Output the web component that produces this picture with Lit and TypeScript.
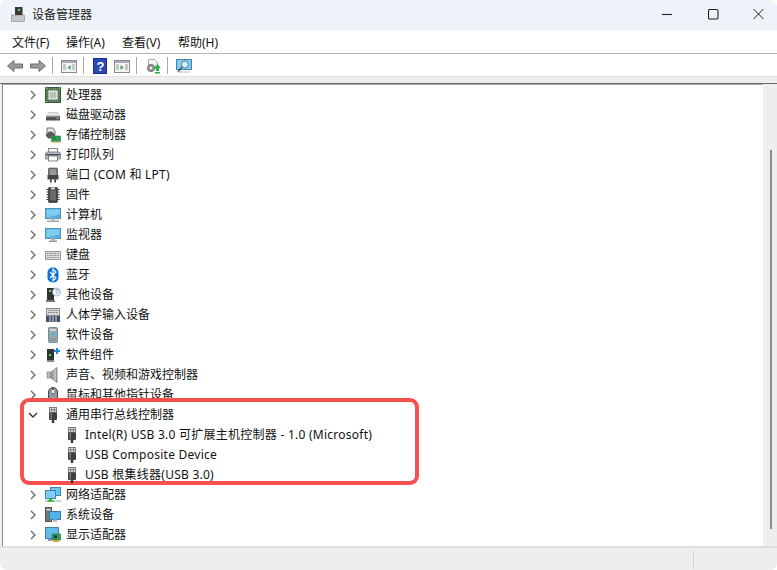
import { LitElement, html, css, svg } from "lit";
import { customElement } from "lit/decorators.js";

const sv = (c: unknown, w = 16, h = 16) =>
  html`<svg width=${w} height=${h} viewBox="0 0 ${w} ${h}">${c}</svg>`;

const usb = svg`<rect x="4.5" y="0.5" width="7" height="5" fill="#c9c9c9" stroke="#7a7a7a"/><rect x="6" y="2" width="1.2" height="1.6" fill="#444"/><rect x="8.8" y="2" width="1.2" height="1.6" fill="#444"/><rect x="4" y="5.5" width="8" height="7.5" rx="1" fill="#3f3f3f"/><rect x="5.5" y="6" width="1.5" height="6.5" fill="#7a7a7a"/><rect x="6.8" y="13" width="2.4" height="3" fill="#333"/>`;

const screen = svg`<rect x="0.5" y="1.5" width="15" height="10" fill="#4fb3e8" stroke="#5b8fb0"/><rect x="1.5" y="2.5" width="13" height="8" fill="#7fcdf2"/><path d="M1.5 10.5h13v-3z" fill="#4ea9de"/>`;

const ICONS: Record<string, unknown> = {
  cpu: svg`<rect x="0.5" y="0.5" width="15" height="15" fill="#2f6b4a" stroke="#2a5a3e"/><path d="M0 1.5h16M0 14.5h16M1.5 0v16M14.5 0v16" stroke="#c9a64a" stroke-width="1" stroke-dasharray="1 1" opacity=".8"/><rect x="3" y="3" width="10" height="10" fill="#dfe3df" stroke="#6f8d79"/><rect x="5" y="5" width="6" height="6" fill="#b9c2bb"/>`,
  disk: svg`<path d="M1.5 9 4 5.5h8L14.5 9z" fill="#e6e6e6" stroke="#aaa" stroke-width=".6"/><rect x="1" y="9" width="14" height="4.5" rx=".5" fill="#4f4f4f"/><rect x="1" y="9" width="14" height="1.3" fill="#8a8a8a"/><rect x="11.5" y="11" width="2" height="1" fill="#7fe07f"/>`,
  storage: svg`<path d="M2 1h6l2 3v4H2z" fill="#e8e8e8" stroke="#555" stroke-width=".8"/><path d="M0.5 8 4 4.5h3L10.5 8 6 11.5H3z" fill="#5c5c5c"/><rect x="6.5" y="9" width="9" height="5.5" fill="#2e9f5a" stroke="#1f6d40" stroke-width=".6"/><rect x="8" y="10.5" width="2.5" height="2" fill="#173"/><path d="M7 15h8" stroke="#d1a53a"/>`,
  printer: svg`<rect x="3.5" y="1.5" width="9" height="4" fill="#f4f4f4" stroke="#888"/><path d="M0.5 7q0-2 2-2h11q2 0 2 2v5H.5z" fill="#b4bec7" stroke="#66707a" stroke-width=".7"/><rect x="3.5" y="9" width="9" height="5" fill="#fff" stroke="#555" stroke-width=".7"/><rect x="1" y="7" width="14" height="1.2" fill="#3d4350"/>`,
  port: svg`<rect x="3.5" y="1" width="9" height="9" rx="1" fill="#6e6e6e" stroke="#444" stroke-width=".6"/><path d="M5 3h6M5 5h6M5 7h6" stroke="#d4d4d4" stroke-width=".8"/><rect x="2.5" y="8" width="11" height="4.5" fill="#444"/><rect x="5" y="12.5" width="1.6" height="3" fill="#333"/><rect x="9.4" y="12.5" width="1.6" height="3" fill="#333"/>`,
  firmware: svg`<rect x="3.5" y="0.5" width="9" height="15" rx="1" fill="#444" stroke="#222" stroke-width=".6"/><path d="M1.5 2.5h2M1.5 5h2M1.5 7.5h2M1.5 10h2M1.5 12.5h2M12.5 2.5h2M12.5 5h2M12.5 7.5h2M12.5 10h2M12.5 12.5h2" stroke="#333"/><rect x="6" y="0.5" width="4" height="2" fill="#ddd"/><rect x="5" y="3.5" width="6" height="10" fill="#696969"/>`,
  computer: svg`${screen}<rect x="6" y="11.5" width="4" height="2" fill="#bbb"/><rect x="2" y="13.5" width="12" height="1.5" fill="#9aa7b0"/>`,
  monitor: svg`${screen}<rect x="6" y="11.5" width="4" height="2" fill="#b5b5b5"/><rect x="4" y="13.5" width="8" height="1.5" fill="#999"/>`,
  keyboard: svg`<rect x="0.5" y="4.5" width="15" height="8" fill="#dcdcdc" stroke="#9a9a9a"/><path d="M2 6.5h12M2 8.5h12M2 10.5h12" stroke="#8b8b8b" stroke-dasharray="1 .6"/>`,
  bluetooth: svg`<rect x="2.5" y="0.5" width="11" height="15" rx="5" fill="#0a6fd8"/><path d="M5 5l6 6-3 3V2l3 3-6 6" fill="none" stroke="#fff" stroke-width="1.1"/>`,
  other: svg`<rect x="2" y="1" width="7" height="13" fill="#333"/><rect x="4" y="3" width="2" height="2" fill="#5fe06c"/><rect x="1" y="13" width="9" height="2" fill="#777"/><circle cx="11.5" cy="5" r="4" fill="#eef4fa" stroke="#8aa4c0" stroke-width=".8"/><text x="9.9" y="7.4" font-size="6.5" font-family="Liberation Sans" fill="#3b6ea8">?</text>`,
  hid: svg`<rect x="1.5" y="1.5" width="13" height="7" fill="#d8d8d8" stroke="#888"/><path d="M3 3.5h10M3 5.5h10" stroke="#777" stroke-dasharray="1 .6"/><rect x="1" y="9" width="14" height="6" fill="#3f4f70"/><path d="M5 9v6M8 9v6M11 9v6" stroke="#ddd"/>`,
  software: svg`<rect x="3.5" y="0.5" width="9" height="15" rx="1" fill="#9aa8ac" stroke="#7b8a8e"/><rect x="5" y="2" width="6" height="2" fill="#cfd9dc"/><rect x="6" y="6" width="4" height="3" fill="#5fb6c9"/><rect x="5" y="11" width="6" height="3" fill="#87979b"/>`,
  component: svg`<rect x="2" y="2" width="7" height="11" fill="#333"/><rect x="4" y="7" width="2" height="2" fill="#4fe06a"/><rect x="2" y="13" width="7" height="2" fill="#888"/><path d="M11 1h2v2h2v2h-2v2h-2V5H9V3h2z" fill="#1f8be0"/>`,
  sound: svg`<rect x="2" y="5" width="4" height="6" fill="#bbb" stroke="#777" stroke-width=".6"/><path d="M6 5l6-4.500v15L6 11z" fill="#a3a3a3" stroke="#6f6f6f" stroke-width=".7"/><path d="M10 2v12" stroke="#d9d9d9"/>`,
  mouse: svg`<rect x="3.5" y="0.5" width="9" height="15" rx="4.5" fill="#8e9aa6" stroke="#444"/><path d="M8 1v6" stroke="#333"/><rect x="7" y="3" width="2" height="3" fill="#eee"/>`,
  usb,
  network: svg`<rect x="5.5" y="0.5" width="10" height="8" fill="#6fc3ee" stroke="#3f86b3"/><rect x="0.5" y="3.500" width="10" height="8" fill="#7fcdf2" stroke="#3f86b3"/><rect x="0" y="13" width="16" height="2" fill="#cfcfcf"/><path d="M5.500 11.500v3" stroke="#2fae3e" stroke-width="3"/><rect x="2.500" y="13" width="6" height="2" fill="#3bc24a"/>`,
  system: svg`<rect x="0.5" y="0.5" width="6" height="14" fill="#777" stroke="#555"/><rect x="1.5" y="2" width="4" height="1.5" fill="#ddd"/><rect x="4.5" y="4.5" width="11" height="8" fill="#4fb3e8" stroke="#3a7ea8"/><rect x="8" y="12.5" width="4" height="2.5" fill="#bbb"/>`,
  display: svg`<rect x="0.5" y="0.5" width="13" height="11" fill="#63bdec" stroke="#3f7fa5"/><rect x="7" y="7" width="8.5" height="6" fill="#2e9f5a" stroke="#1f6d40" stroke-width=".6"/><rect x="9" y="8.500" width="3" height="2.500" fill="#134"/><rect x="8" y="13" width="6" height="2" fill="#e2a12c"/><rect x="3" y="12" width="4" height="2" fill="#999"/>`,
};

const ROWS: [string, string][] = [
  ["cpu", "处理器"], ["disk", "磁盘驱动器"], ["storage", "存储控制器"], ["printer", "打印队列"],
  ["port", "端口 (COM 和 LPT)"], ["firmware", "固件"], ["computer", "计算机"], ["monitor", "监视器"],
  ["keyboard", "键盘"], ["bluetooth", "蓝牙"], ["other", "其他设备"], ["hid", "人体学输入设备"],
  ["software", "软件设备"], ["component", "软件组件"], ["sound", "声音、视频和游戏控制器"], ["mouse", "鼠标和其他指针设备"],
];
const AFTER: [string, string][] = [["network", "网络适配器"], ["system", "系统设备"], ["display", "显示适配器"]];
const USB_KIDS = ["Intel(R) USB 3.0 可扩展主机控制器 - 1.0 (Microsoft)", "USB Composite Device", "USB 根集线器(USB 3.0)"];

const chevR = html`<svg class="chev" width="10" height="10" viewBox="0 0 10 10"><path d="M3 1l4 4-4 4" fill="none" stroke="#6a6a6a" stroke-width="1.4"/></svg>`;
const chevD = html`<svg class="chev" width="10" height="10" viewBox="0 0 10 10"><path d="M1 3l4 4 4-4" fill="none" stroke="#333" stroke-width="1.4"/></svg>`;

@customElement("app-root")
export class AppRoot extends LitElement {
  static styles = css`
    :host { display: block; width: 777px; height: 570px; background: #fff; overflow: hidden;
      font-family: "Noto Sans", "Noto Sans CJK SC", sans-serif; font-size: 12px; color: #111; }
    .win { display: flex; flex-direction: column; height: 570px; border-radius: 7px; overflow: hidden; }
    .title { height: 30px; flex: none; box-sizing: border-box; background: #edf3f9; display: flex; align-items: center; padding: 0 0 2px 11px; }
    .title .name { flex: 1; color: #222; margin-left: 5px; }
    .wc { width: 45.5px; height: 16px; display: flex; align-items: center; justify-content: flex-start; flex: none; }
    .wc.last { width: 24px; }
    .menu { height: 23px; flex: none; display: flex; align-items: center; padding-left: 12px; border-bottom: 1px solid #b5b5bb; }
    .menu span { width: 56px; white-space: nowrap; }
    .menu span:first-child { width: 54px; }
    .tools { height: 22px; flex: none; display: flex; align-items: center; padding: 1px 0 0 7px; box-sizing: border-box; }
    .sep { width: 1px; height: 17px; background: #a8a8a8; }
    .strip { height: 6px; flex: none; background: #eeeeee; border-top: 1px solid #e2e2e2; border-bottom: 1px solid #696969; }
    .body { flex: 1; min-height: 0; display: flex; background: #eee; padding-left: 2px; }
    .tree { flex: 1; min-width: 0; background: #fff; border-left: 1px solid #8a8a8a; overflow: hidden; box-shadow: inset 0 1px 0 #a9a9a9; padding-top: 1px; }
    .row { height: 20px; display: flex; align-items: center; padding-left: 25px; white-space: nowrap; line-height: 20px; }
    .chev { width: 10px; margin-right: 7px; flex: none; }
    .ico { width: 16px; height: 16px; flex: none; margin-right: 5px; }
    .ico svg, .tb svg { display: block; }
    .lat { letter-spacing: .25px; }
    .hl { position: relative; margin: -7px 0 0 17px; width: 399px; height: 87px; box-sizing: border-box; padding-top: 3px; border: 4px solid #f9504f; border-radius: 9px; background: #fff; }
    .hl .row { padding-left: 4px; }
    .hl .kid { padding-left: 40px; }
    .scroll { width: 14px; flex: none; background: #eeeeee; display: flex; padding: 66px 0 0 7px; box-sizing: border-box; }
    .thumb { width: 2px; height: 379px; background: #8b8b8b; }
    .status { height: 24px; flex: none; background: #eeeeee; border-top: 2px solid #dedede; box-sizing: border-box; display: flex; padding: 2px 0 1px 693px; }
    .status i { width: 1px; background: #d2d2d2; display: block; }
    .tb { flex: none; }
  `;

  private rowT(r: [string, string]) {
    const lat = r[0] === "port";
    return html`<div class="row">${chevR}<span class="ico">${sv(ICONS[r[0]])}</span><span class=${lat ? "lat" : ""}>${r[1]}</span></div>`;
  }

  render() {
    const tool = (c: unknown, w: number, ml: number) =>
      html`<span class="tb" style="margin-left:${ml}px">${sv(c, w, 16)}</span>`;
    const sepAt = (ml: number) => html`<span class="sep" style="margin-left:${ml}px"></span>`;
    const back = svg`<path d="M.5 8 7 2.500v3.500h8.500v4H7v3.500z" fill="#9a9a9a" stroke="#6e6e6e"/>`;
    const fwd = svg`<path d="M15.500 8 9 2.500v3.500H.5v4H9v3.500z" fill="#9a9a9a" stroke="#6e6e6e"/>`;
    const panelL = svg`<rect x="0.5" y="2.500" width="15" height="12" fill="#f4f4f4" stroke="#8a8a8a"/><rect x="1" y="3" width="14" height="2" fill="#aab"/><path d="M2 7h3M2 9h3M2 11h3M11 7h3M11 9h3M11 11h3" stroke="#999"/><path d="M9.500 7v5L6.500 9.500z" fill="#3aa04a"/>`;
    const panelR = svg`<rect x="0.5" y="2.500" width="15" height="12" fill="#f4f4f4" stroke="#8a8a8a"/><rect x="1" y="3" width="14" height="2" fill="#aab"/><path d="M2 7h3M2 9h3M2 11h3M11 7h3M11 9h3M11 11h3" stroke="#999"/><path d="M6.500 7v5l3-2.500z" fill="#3aa04a"/>`;
    const help = svg`<rect x="1.500" y="0.5" width="13" height="15" fill="#2b47b5" stroke="#1c2f80"/><text x="4.600" y="13" font-size="13" font-weight="700" font-family="Liberation Sans" fill="#fff">?</text>`;
    const update = svg`<path d="M3.500 1.500h6l3 3v6h-9z" fill="#f2f2f2" stroke="#aaa"/><circle cx="6" cy="10" r="3.500" fill="#9b9b9b" stroke="#6a6a6a"/><circle cx="6" cy="10" r="1.300" fill="#eee"/><path d="M9 10l3.500-4 3.500 4h-2v3h-3v-3z" fill="#27b24a"/><rect x="10" y="14" width="5" height="1.500" fill="#27b24a"/>`;
    const scan = svg`<rect x="0.5" y="1.500" width="15" height="10" fill="#7fcdf2" stroke="#3f86b3"/><circle cx="9" cy="6.500" r="3.500" fill="#cdeefb" stroke="#6a7f8c"/><path d="M6 9l-4 5" stroke="#555" stroke-width="1.600"/><rect x="2" y="13.500" width="12" height="1" fill="#b8c2ca"/>`;
    const appIcon = svg`<rect x="0.5" y="9" width="13" height="6.500" fill="#c6c6c6" stroke="#8a8a8a" stroke-width=".6"/><rect x="4" y="1" width="7.500" height="8" fill="#3a3a3a"/><rect x="7" y="3" width="2" height="2" fill="#59d96b"/>`;

    return html`<div class="win">
      <div class="title">
        ${sv(appIcon)}
        <span class="name">设备管理器</span>
        <span class="wc">${sv(svg`<path d="M0 8.500h10" stroke="#222" stroke-width="1.100"/>`, 11, 16)}</span>
        <span class="wc">${sv(svg`<rect x="0.5" y="3.500" width="9.500" height="9.500" rx="1.300" fill="none" stroke="#222" stroke-width="1.100"/>`, 11, 16)}</span>
        <span class="wc last">${sv(svg`<path d="M.5 3l10 10M10.500 3 .5 13" stroke="#222" stroke-width="1"/>`, 11, 16)}</span>
      </div>
      <div class="menu"><span>文件(F)</span><span>操作(A)</span><span>查看(V)</span><span>帮助(H)</span></div>
      <div class="tools">
        ${tool(back, 16, 0)}${tool(fwd, 16, 7)}${sepAt(6)}
        ${tool(panelL, 16, 8)}${sepAt(6)}
        ${tool(help, 16, 8)}${tool(panelR, 16, 6)}${sepAt(6)}
        ${tool(update, 16, 8)}${sepAt(6)}
        ${tool(scan, 16, 8)}
      </div>
      <div class="strip"></div>
      <div class="body">
        <div class="tree">
          ${ROWS.map((r) => this.rowT(r))}
          <div class="hl">
            <div class="row">${chevD}<span class="ico">${sv(usb)}</span><span>通用串行总线控制器</span></div>
            ${USB_KIDS.map((t) => html`<div class="row kid"><span class="ico">${sv(usb)}</span><span class="lat">${t}</span></div>`)}
          </div>
          ${AFTER.map((r) => this.rowT(r))}
        </div>
        <div class="scroll"><div class="thumb"></div></div>
      </div>
      <div class="status"><i></i></div>
    </div>`;
  }
}
